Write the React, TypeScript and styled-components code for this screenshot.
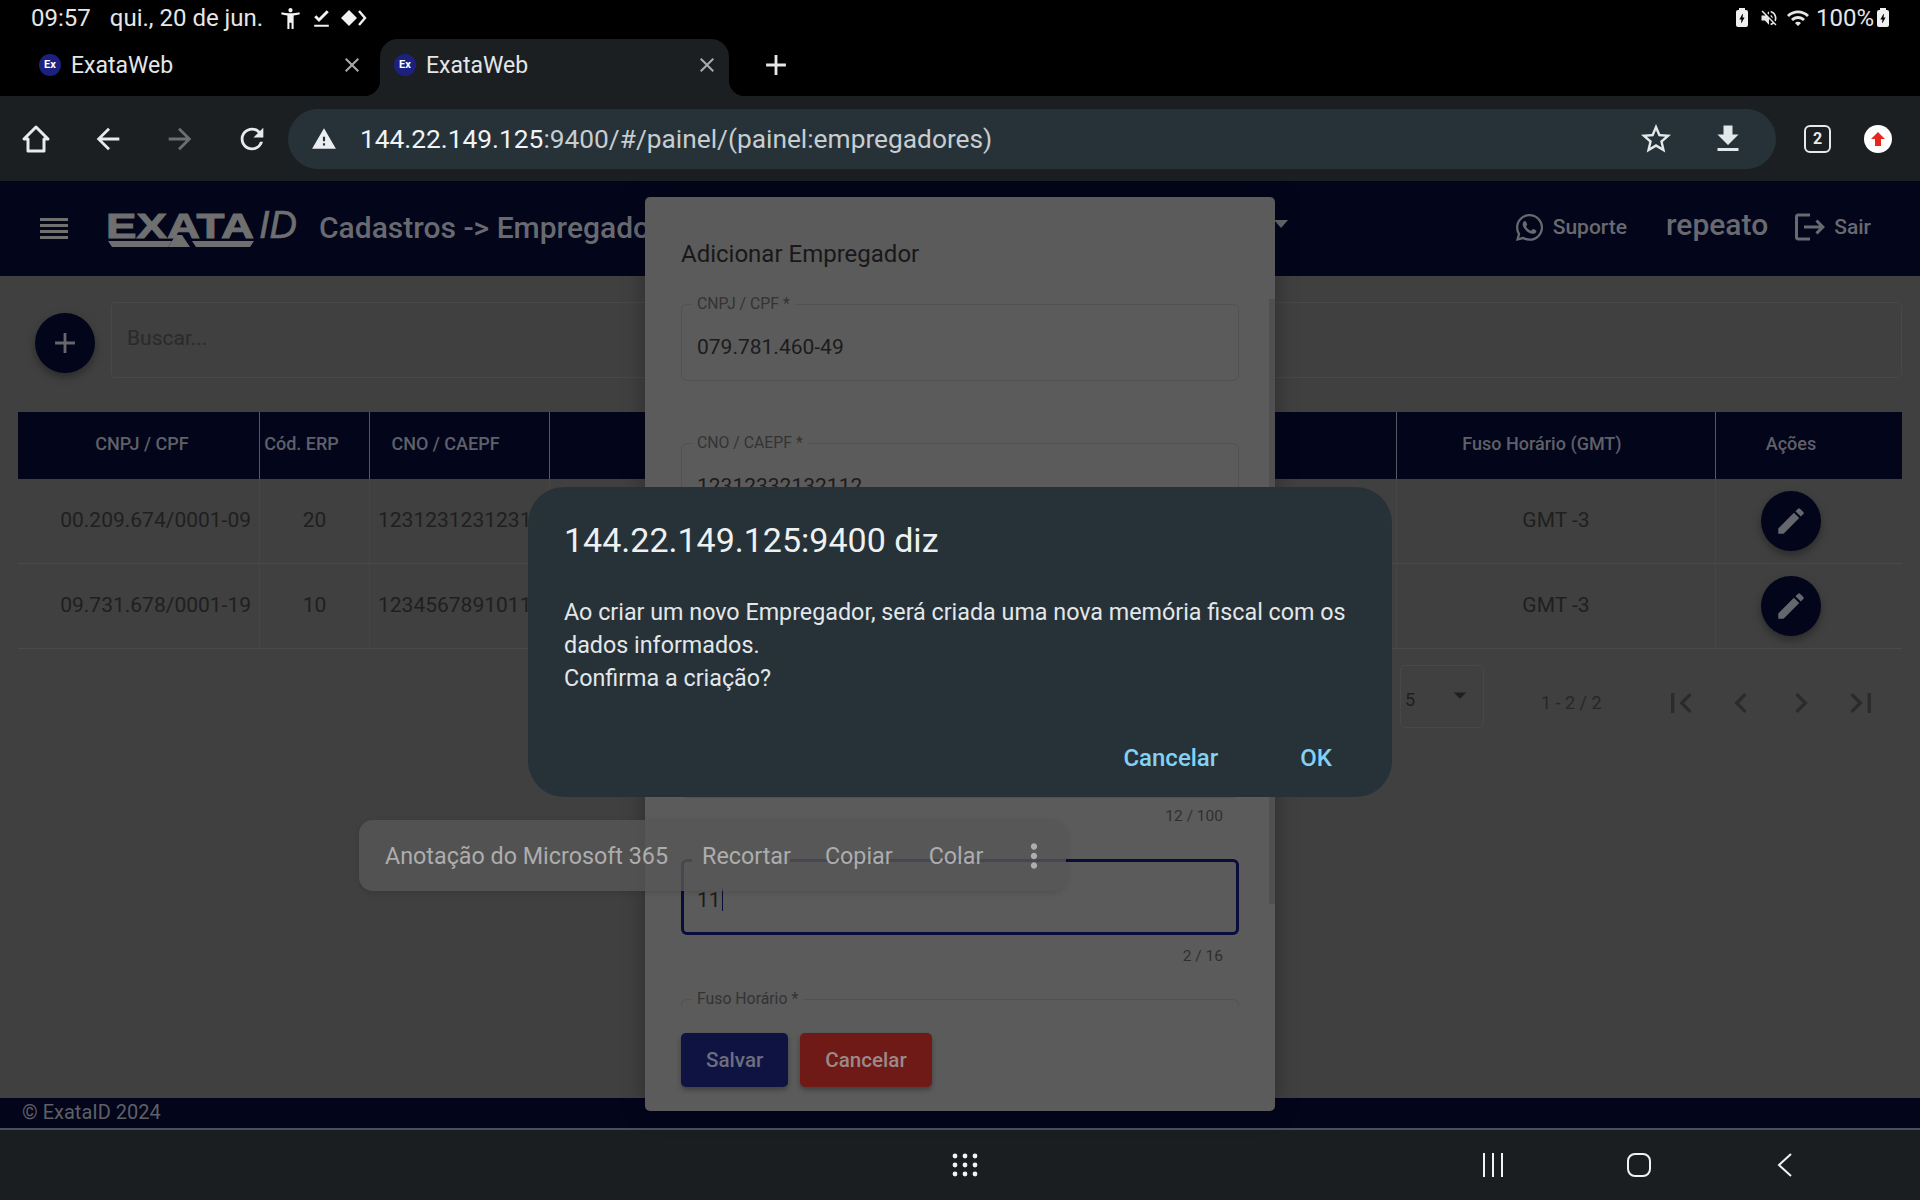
import React from 'react';
import styled, { createGlobalStyle } from 'styled-components';
import {
  MdAccessibilityNew,
  MdAdd,
  MdArrowBack,
  MdArrowDropDown,
  MdArrowForward,
  MdBolt,
  MdChevronLeft,
  MdChevronRight,
  MdClose,
  MdEdit,
  MdFileDownload,
  MdFileDownloadDone,
  MdFirstPage,
  MdLastPage,
  MdLogout,
  MdMoreVert,
  MdRefresh,
  MdStarBorder,
  MdVolumeOff,
  MdWarning,
  MdWifi,
} from 'react-icons/md';
import { FaWhatsapp } from 'react-icons/fa';

const GlobalStyle = createGlobalStyle`
  html, body {
    margin: 0;
    padding: 0;
    background: #000;
  }
  * {
    box-sizing: border-box;
  }
  body {
    font-family: Roboto, "Liberation Sans", sans-serif;
  }
`;

// --- device frame ---
const Screen = styled.div`
  position: relative;
  width: 1920px;
  height: 1200px;
  overflow: hidden;
  display: flex;
  flex-direction: column;
  background: #000;
`;

const StatusBar = styled.div`
  height: 39px;
  flex: none;
  display: flex;
  align-items: center;
  padding: 0 31px 3px 31px;
  color: #e6e6e6;
  font-size: 24px;
`;

const StatusDate = styled.span`
  margin-left: 19px;
  margin-right: 15px;
`;

const StatusIcons = styled.div`
  display: flex;
  align-items: center;
  gap: 6px;
  font-size: 25px;
  color: #f2f2f2;
`;

const StatusRight = styled.div`
  margin-left: auto;
  display: flex;
  align-items: center;
  color: #e6e6e6;
`;

const StatusItem = styled.span<{ $ml: number }>`
  display: flex;
  margin-left: ${(p) => p.$ml}px;
`;

const BatteryShape = styled.span<{ $ml: number }>`
  position: relative;
  width: 12px;
  height: 17px;
  margin-left: ${(p) => p.$ml}px;
  display: flex;
  align-items: center;
  justify-content: center;
  border-radius: 2px;
  background: #f0f0f0;
  color: #000;
  font-size: 13px;

  &::before {
    content: '';
    position: absolute;
    top: -2px;
    left: 3px;
    width: 6px;
    height: 2px;
    background: #f0f0f0;
  }
`;

// --- tabs ---
const TabStrip = styled.div`
  height: 57px;
  flex: none;
  display: flex;
  align-items: flex-end;
  gap: 6px;
  padding-left: 25px;
`;

const Tab = styled.div<{ $active?: boolean }>`
  position: relative;
  width: 349px;
  height: 57px;
  display: flex;
  align-items: center;
  padding: 0 10px 5px 14px;
  border-radius: 18px 18px 0 0;
  color: #e4e6e7;
  font-size: 23px;
  background: ${(p) => (p.$active ? '#1b1f22' : 'transparent')};

  ${(p) =>
    p.$active &&
    `
    &::before, &::after {
      content: '';
      position: absolute;
      bottom: 0;
      width: 16px;
      height: 16px;
    }
    &::before {
      left: -16px;
      background: radial-gradient(circle at 0 0, transparent 16px, #1b1f22 16.5px);
    }
    &::after {
      right: -16px;
      background: radial-gradient(circle at 100% 0, transparent 16px, #1b1f22 16.5px);
    }
  `}
`;

const Favicon = styled.span`
  width: 22px;
  height: 22px;
  flex: none;
  margin-right: 10px;
  border-radius: 50%;
  background: #1c2180;
  color: #fff;
  font-size: 11px;
  font-weight: 700;
  line-height: 22px;
  text-align: center;
`;

const TabClose = styled.span`
  margin-left: auto;
  display: flex;
  color: #a9acae;
  font-size: 24px;
`;

const NewTab = styled.span`
  display: flex;
  margin: 0 0 5px 24px;
  height: 52px;
  align-items: center;
  color: #e4e6e7;
  font-size: 34px;
`;

// --- browser toolbar ---
const Toolbar = styled.div`
  height: 85px;
  flex: none;
  display: flex;
  align-items: center;
  padding: 1px 0 0 18px;
  background: #1b1f22;
`;

const ToolIcon = styled.span<{ $dim?: boolean }>`
  width: 36px;
  height: 36px;
  margin-right: 36px;
  display: flex;
  align-items: center;
  justify-content: center;
  font-size: 34px;
  color: ${(p) => (p.$dim ? '#6b6f72' : '#e8eaeb')};
`;

const UrlBar = styled.div`
  width: 1488px;
  height: 60px;
  margin-left: -18px;
  display: flex;
  align-items: center;
  padding: 0 30px 0 23px;
  border-radius: 30px;
  background: #263238;
  color: #e6eaec;
  font-size: 26.3px;
`;

const UrlWarning = styled.span`
  display: flex;
  margin-right: 23px;
  font-size: 26px;
  color: #eceff1;
`;

const UrlHost = styled.span`
  color: #f1f3f4;
`;

const UrlPath = styled.span`
  color: #c7cdd0;
`;

const UrlAction = styled.span`
  display: flex;
  font-size: 36px;
  color: #e3e8ea;
`;

const UrlActions = styled.div`
  margin-left: auto;
  display: flex;
  align-items: center;
  gap: 36px;
`;

const TabCount = styled.span`
  width: 27px;
  height: 28px;
  margin-left: 28px;
  border: 2.5px solid #e6e8e9;
  border-radius: 6px;
  color: #e6e8e9;
  font-size: 16px;
  font-weight: 700;
  line-height: 23px;
  text-align: center;
`;

const Avatar = styled.span`
  width: 28px;
  height: 28px;
  margin-left: 33px;
  display: flex;
  align-items: center;
  justify-content: center;
  border-radius: 50%;
  background: #fff;
`;

// --- app header ---
const AppHeader = styled.header`
  height: 95px;
  flex: none;
  display: flex;
  align-items: center;
  padding: 0 49px 3px 40px;
  background: #03051b;
  color: #707070;
`;

const MenuBars = styled.svg`
  display: block;
  margin-top: 2px;
`;

const LogoBox = styled.span`
  display: flex;
  margin: 3px 21px 0 38px;
`;

const PageTitle = styled.div`
  width: 945px;
  flex: none;
  font-size: 30px;
  font-weight: 500;
  color: #696a70;
  white-space: nowrap;
`;

const HeaderCaret = styled.span`
  width: 0;
  height: 0;
  margin: -6px 0 0 10px;
  border: 7px solid transparent;
  border-top: 8px solid #696a70;
  border-bottom: 0;
`;

const HeaderRight = styled.div`
  margin-left: auto;
  display: flex;
  align-items: center;
`;

const HeaderLink = styled.span<{ $gap?: number }>`
  display: flex;
  align-items: center;
  gap: ${(p) => p.$gap ?? 8}px;
  font-size: 21px;
  font-weight: 500;
  color: #696a70;
`;

const UserName = styled.span`
  margin: -6px 24px 0 39px;
  font-size: 30px;
  font-weight: 500;
  color: #696a70;
`;

// --- page content ---
const Content = styled.main`
  flex: 1;
  padding: 26px 18px 0;
  background: #404040;
`;

const SearchRow = styled.div`
  display: flex;
  align-items: center;
  gap: 16px;
  padding-left: 17px;

  & > span:first-child {
    margin-top: 5px;
  }
`;

const Fab = styled.span`
  width: 60px;
  height: 60px;
  flex: none;
  display: flex;
  align-items: center;
  justify-content: center;
  border-radius: 50%;
  background: #03051b;
  color: #66676d;
  font-size: 34px;
  box-shadow: 0 4px 9px rgba(0, 0, 0, 0.35);
`;

const SearchBox = styled.div`
  flex: 1;
  height: 76px;
  display: flex;
  align-items: center;
  padding: 0 15px 4px;
  border: 1px solid #484848;
  border-radius: 5px;
  color: #2a2a2a;
  font-size: 21px;
`;

const DataRow = styled.div<{ $head?: boolean }>`
  display: grid;
  grid-template-columns: 242px 110px 180px 847px 319px 186px;
  height: ${(p) => (p.$head ? '67px' : '85px')};
  margin-top: ${(p) => (p.$head ? '34px' : '0')};
  background: ${(p) => (p.$head ? '#03051b' : 'transparent')};
  border-bottom: ${(p) => (p.$head ? 'none' : '1px solid #4a4a4a')};
`;

const HeadCell = styled.div<{ $pr?: number; $pl?: number }>`
  display: flex;
  align-items: center;
  justify-content: center;
  padding: 0 ${(p) => p.$pr ?? 0}px 4px ${(p) => p.$pl ?? 0}px;
  border-right: 1px solid #565862;
  color: #5f6068;
  font-size: 18px;
  font-weight: 500;
  white-space: nowrap;

  &:last-child {
    border-right: none;
  }
`;

const Cell = styled.div<{ $align?: string; $pr?: number }>`
  display: flex;
  align-items: center;
  justify-content: ${(p) => p.$align ?? 'center'};
  padding: 0 ${(p) => p.$pr ?? 8}px 2px 8px;
  border-right: 1px solid #454545;
  color: #1f1f1f;
  font-size: 21px;
  white-space: nowrap;
  overflow: hidden;

  &:last-child {
    border-right: none;
    overflow: visible;
    padding-bottom: 0;
  }
`;

const Paginator = styled.div`
  display: flex;
  align-items: center;
  margin-top: 16px;
  padding-left: 1382px;
`;

const PageSize = styled.div`
  width: 84px;
  height: 63px;
  display: flex;
  align-items: center;
  justify-content: space-between;
  padding: 6px 8px 0 4px;
  border: 1px solid #484848;
  border-radius: 5px;
  color: #1f1f1f;
  font-size: 18px;

  svg {
    margin-top: -10px;
  }
`;

const PageRange = styled.span`
  margin: 12px 59px 0 57px;
  color: #272727;
  font-size: 18px;
  white-space: nowrap;
`;

const PageButtons = styled.div`
  display: flex;
  gap: 20px;
  margin-top: 12px;
  color: #2b2b2b;
  font-size: 40px;

  svg {
    display: block;
  }
`;

const Footer = styled.footer`
  height: 30px;
  flex: none;
  display: flex;
  align-items: center;
  padding: 0 0 2px 22px;
  background: #03051b;
  color: #5f6066;
  font-size: 20px;
`;

// --- android nav bar ---
const NavBar = styled.nav`
  height: 72px;
  flex: none;
  display: flex;
  align-items: center;
  padding-left: 952px;
  border-top: 2px solid #4a4f5c;
  background: #1a1e21;
`;

const NavIcon = styled.svg<{ $ml: number }>`
  display: block;
  margin-left: ${(p) => p.$ml}px;
  color: #f2f2f2;
`;

// --- modal behind the native dialog ---
const Modal = styled.section`
  position: absolute;
  left: 645px;
  top: 197px;
  width: 630px;
  height: 914px;
  padding: 0 36px;
  border-radius: 5px;
  background: #5b5b5b;
  box-shadow: 0 0 26px rgba(0, 0, 0, 0.3);
`;

const ModalScroll = styled.div`
  height: 810px;
  overflow: hidden;
`;

const ModalTitle = styled.h2`
  margin: 0;
  padding-top: 37px;
  height: 98px;
  color: #181818;
  font-size: 24px;
  font-weight: 400;
  line-height: 40px;
`;

const FieldBlock = styled.div`
  height: 139px;
`;

const Field = styled.fieldset<{ $focused?: boolean }>`
  height: ${(p) => (p.$focused ? '84px' : '86px')};
  margin: 0;
  min-width: 0;
  padding: 0 ${(p) => (p.$focused ? '13px' : '15px')};
  border: ${(p) => (p.$focused ? '3px solid #0a0c3a' : '1px solid #525252')};
  border-radius: 6px;
`;

const FieldLabel = styled.legend<{ $blank?: boolean }>`
  height: 18px;
  margin-left: -5px;
  padding: 0 5px;
  width: ${(p) => (p.$blank ? '98px' : 'auto')};
  color: #333;
  font-size: 15.8px;
  line-height: 18px;
`;

const FieldValue = styled.div<{ $focused?: boolean }>`
  padding-top: ${(p) => (p.$focused ? '17px' : '20px')};
  color: #1b1b1b;
  font-size: 21px;
  line-height: 28px;
`;

const Caret = styled.span`
  display: inline-block;
  width: 1px;
  height: 23px;
  margin-left: 1px;
  vertical-align: -4px;
  background: #0a0c3a;
`;

const FieldCount = styled.div<{ $focused?: boolean }>`
  margin-top: ${(p) => (p.$focused ? '12px' : '9px')};
  padding-right: 16px;
  text-align: right;
  color: #2f2f2f;
  font-size: 15.5px;
  line-height: 18px;
`;

const ModalActions = styled.div`
  display: flex;
  gap: 12px;
  margin-top: 26px;
`;

const ModalButton = styled.span<{ $danger?: boolean }>`
  height: 54px;
  padding: 0 25px 1px;
  display: flex;
  align-items: center;
  border-radius: 5px;
  background: ${(p) => (p.$danger ? '#6f1a17' : '#0f1342')};
  color: ${(p) => (p.$danger ? '#9a8a89' : '#6c6e80')};
  font-size: 20.6px;
  font-weight: 500;
  box-shadow: 0 3px 5px rgba(0, 0, 0, 0.3);
`;

const ModalScrollbar = styled.span`
  position: absolute;
  right: 0;
  top: 102px;
  width: 6px;
  height: 605px;
  background: #505050;
`;

// --- selection toolbar ---
const SelectionMenu = styled.div`
  position: absolute;
  left: 359px;
  top: 820px;
  width: 707px;
  height: 71px;
  display: flex;
  align-items: center;
  padding: 0 0 0 26px;
  border-radius: 14px;
  background: rgba(86, 86, 86, 0.8);
  box-shadow: 0 2px 6px rgba(0, 0, 0, 0.12);
  color: #adadad;
  font-size: 23.3px;
`;

const MenuItem = styled.span<{ $ml: number }>`
  margin-left: ${(p) => p.$ml}px;
  white-space: nowrap;
`;

const MenuMore = styled.span`
  display: flex;
  margin-left: 32px;
  font-size: 38px;
  color: #adadad;
`;

// --- native confirm dialog ---
const ConfirmDialog = styled.div`
  position: absolute;
  left: 528px;
  top: 487px;
  width: 864px;
  height: 310px;
  padding: 30px 36px 0;
  border-radius: 36px;
  background: #263238;
  color: #e3e7e9;
`;

const ConfirmTitle = styled.div`
  height: 46px;
  color: #eef1f2;
  font-size: 34px;
  line-height: 46px;
`;

const ConfirmBody = styled.p`
  margin: 33px 0 0;
  font-size: 23.3px;
  line-height: 33px;
`;

const ConfirmActions = styled.div`
  display: flex;
  justify-content: flex-end;
  gap: 82px;
  margin-top: 49px;
  padding-right: 24px;
`;

const ConfirmButton = styled.span`
  color: #83d2f6;
  font-size: 24px;
  font-weight: 500;
`;

const rows = [
  { doc: '00.209.674/0001-09', erp: '20', cno: '1231231231231' },
  { doc: '09.731.678/0001-19', erp: '10', cno: '1234567891011' },
];

function ExataLogo() {
  return (
    <svg width="192" height="50" viewBox="0 0 192 50" fill="#6f6f6f" stroke="#6f6f6f" overflow="visible">
      <text
        x="0"
        y="34"
        fontFamily="Liberation Sans, sans-serif"
        fontSize="35"
        fontWeight="700"
        strokeWidth="1"
        textLength="148"
        lengthAdjust="spacingAndGlyphs"
      >
        EXATA
      </text>
      <text
        x="153"
        y="34"
        fontFamily="Liberation Sans, sans-serif"
        fontSize="38"
        fontStyle="italic"
        strokeWidth="0.6"
        textLength="38"
        lengthAdjust="spacingAndGlyphs"
      >
        ID
      </text>
      <g stroke="none">
        <polygon points="2,37 66,37 62,43 6,43" />
        <polygon points="62,43 70,31 76,31 84,43" />
        <polygon points="86,37 148,37 144,43 90,43" />
      </g>
    </svg>
  );
}

export default function App() {
  return (
    <>
      <GlobalStyle />
      <Screen>
        <StatusBar>
          <span>09:57</span>
          <StatusDate>qui., 20 de jun.</StatusDate>
          <StatusIcons>
            <MdAccessibilityNew />
            <MdFileDownloadDone />
            <svg width="28" height="20" viewBox="0 0 28 20" fill="currentColor">
              <polygon points="9,2 17,10 9,18 1,10" />
              <path d="M19 3l6 7-6 7" fill="none" stroke="currentColor" strokeWidth="2.4" />
            </svg>
          </StatusIcons>
          <StatusRight>
            <BatteryShape $ml={0}>
              <MdBolt />
            </BatteryShape>
            <StatusItem $ml={11}>
              <MdVolumeOff size={20} />
            </StatusItem>
            <StatusItem $ml={7}>
              <MdWifi size={24} />
            </StatusItem>
            <StatusItem $ml={6}>100%</StatusItem>
            <BatteryShape $ml={3}>
              <MdBolt />
            </BatteryShape>
          </StatusRight>
        </StatusBar>

        <TabStrip>
          <Tab>
            <Favicon>Ex</Favicon>
            ExataWeb
            <TabClose>
              <MdClose />
            </TabClose>
          </Tab>
          <Tab $active>
            <Favicon>Ex</Favicon>
            ExataWeb
            <TabClose>
              <MdClose />
            </TabClose>
          </Tab>
          <NewTab>
            <MdAdd />
          </NewTab>
        </TabStrip>

        <Toolbar>
          <ToolIcon>
            <svg width="30" height="30" viewBox="0 0 30 30" fill="none" stroke="currentColor" strokeWidth="3" strokeLinejoin="round">
              <path d="M15 3 L3 15 H7 V27 H23 V15 H27 Z" />
            </svg>
          </ToolIcon>
          <ToolIcon>
            <MdArrowBack />
          </ToolIcon>
          <ToolIcon $dim>
            <MdArrowForward />
          </ToolIcon>
          <ToolIcon>
            <MdRefresh />
          </ToolIcon>
          <UrlBar>
            <UrlWarning>
              <MdWarning />
            </UrlWarning>
            <span>
              <UrlHost>144.22.149.125</UrlHost>
              <UrlPath>:9400/#/painel/(painel:empregadores)</UrlPath>
            </span>
            <UrlActions>
              <UrlAction>
                <MdStarBorder />
              </UrlAction>
              <UrlAction>
                <MdFileDownload />
              </UrlAction>
            </UrlActions>
          </UrlBar>
          <TabCount>2</TabCount>
          <Avatar>
            <svg width="16" height="16" viewBox="0 0 16 16" fill="#e5281e">
              <path d="M8 1 L15 8 H11 V15 H5 V8 H1 Z" />
            </svg>
          </Avatar>
        </Toolbar>

        <AppHeader>
          <MenuBars width="28" height="21" viewBox="0 0 28 21" fill="#707070">
            <rect y="0" width="28" height="3" />
            <rect y="6" width="28" height="3" />
            <rect y="12" width="28" height="3" />
            <rect y="18" width="28" height="3" />
          </MenuBars>
          <LogoBox>
            <ExataLogo />
          </LogoBox>
          <PageTitle>Cadastros -&gt; Empregadores</PageTitle>
          <HeaderCaret />
          <HeaderRight>
            <HeaderLink>
              <FaWhatsapp size={31} />
              Suporte
            </HeaderLink>
            <UserName>repeato</UserName>
            <HeaderLink $gap={6}>
              <MdLogout size={36} />
              Sair
            </HeaderLink>
          </HeaderRight>
        </AppHeader>

        <Content>
          <SearchRow>
            <Fab>
              <MdAdd />
            </Fab>
            <SearchBox>Buscar...</SearchBox>
          </SearchRow>

          <DataRow $head>
            <HeadCell $pl={7}>CNPJ / CPF</HeadCell>
            <HeadCell $pr={26}>Cód. ERP</HeadCell>
            <HeadCell $pr={28}>CNO / CAEPF</HeadCell>
            <HeadCell />
            <HeadCell $pr={28}>Fuso Horário (GMT)</HeadCell>
            <HeadCell $pr={36}>Ações</HeadCell>
          </DataRow>
          {rows.map((row) => (
            <DataRow key={row.doc}>
              <Cell $align="flex-end">{row.doc}</Cell>
              <Cell>{row.erp}</Cell>
              <Cell $align="flex-start">{row.cno}</Cell>
              <Cell />
              <Cell>GMT -3</Cell>
              <Cell $pr={44}>
                <Fab>
                  <MdEdit />
                </Fab>
              </Cell>
            </DataRow>
          ))}

          <Paginator>
            <PageSize>
              5
              <MdArrowDropDown size={30} />
            </PageSize>
            <PageRange>1 - 2 / 2</PageRange>
            <PageButtons>
              <MdFirstPage />
              <MdChevronLeft />
              <MdChevronRight />
              <MdLastPage />
            </PageButtons>
          </Paginator>
        </Content>

        <Footer>© ExataID 2024</Footer>

        <NavBar>
          <NavIcon $ml={0} width="26" height="24" viewBox="0 0 26 24" fill="currentColor">
            {[3, 12, 21].map((cy) =>
              [3, 13, 23].map((cx) => <circle key={`${cx}-${cy}`} cx={cx} cy={cy} r="2.4" />),
            )}
          </NavIcon>
          <NavIcon $ml={504} width="22" height="24" viewBox="0 0 22 24" fill="currentColor">
            <rect x="1" y="0" width="2" height="24" />
            <rect x="10" y="0" width="2" height="24" />
            <rect x="19" y="0" width="2" height="24" />
          </NavIcon>
          <NavIcon $ml={123} width="24" height="24" viewBox="0 0 24 24" fill="none" stroke="currentColor" strokeWidth="2">
            <rect x="1" y="1" width="22" height="22" rx="7" />
          </NavIcon>
          <NavIcon $ml={126} width="16" height="24" viewBox="0 0 16 24" fill="none" stroke="currentColor" strokeWidth="2">
            <path d="M14 1 L2 12 L14 23" />
          </NavIcon>
        </NavBar>

        <Modal>
          <ModalScroll>
            <ModalTitle>Adicionar Empregador</ModalTitle>
            <FieldBlock>
              <Field>
                <FieldLabel>CNPJ / CPF *</FieldLabel>
                <FieldValue>079.781.460-49</FieldValue>
              </Field>
            </FieldBlock>
            <FieldBlock>
              <Field>
                <FieldLabel>CNO / CAEPF *</FieldLabel>
                <FieldValue>12312332132112</FieldValue>
              </Field>
            </FieldBlock>
            <FieldBlock>
              <Field>
                <FieldLabel $blank />
              </Field>
            </FieldBlock>
            <FieldBlock>
              <Field>
                <FieldLabel $blank />
              </Field>
              <FieldCount>12 / 100</FieldCount>
            </FieldBlock>
            <FieldBlock>
              <Field $focused>
                <FieldLabel $blank />
                <FieldValue $focused>
                  11
                  <Caret />
                </FieldValue>
              </Field>
              <FieldCount $focused>2 / 16</FieldCount>
            </FieldBlock>
            <FieldBlock>
              <Field>
                <FieldLabel>Fuso Horário *</FieldLabel>
              </Field>
            </FieldBlock>
          </ModalScroll>
          <ModalActions>
            <ModalButton>Salvar</ModalButton>
            <ModalButton $danger>Cancelar</ModalButton>
          </ModalActions>
          <ModalScrollbar />
        </Modal>

        <SelectionMenu>
          Anotação do Microsoft 365
          <MenuItem $ml={34}>Recortar</MenuItem>
          <MenuItem $ml={34}>Copiar</MenuItem>
          <MenuItem $ml={36}>Colar</MenuItem>
          <MenuMore>
            <MdMoreVert />
          </MenuMore>
        </SelectionMenu>

        <ConfirmDialog>
          <ConfirmTitle>144.22.149.125:9400 diz</ConfirmTitle>
          <ConfirmBody>
            Ao criar um novo Empregador, será criada uma nova memória fiscal com os dados informados.
            <br />
            Confirma a criação?
          </ConfirmBody>
          <ConfirmActions>
            <ConfirmButton>Cancelar</ConfirmButton>
            <ConfirmButton>OK</ConfirmButton>
          </ConfirmActions>
        </ConfirmDialog>
      </Screen>
    </>
  );
}
